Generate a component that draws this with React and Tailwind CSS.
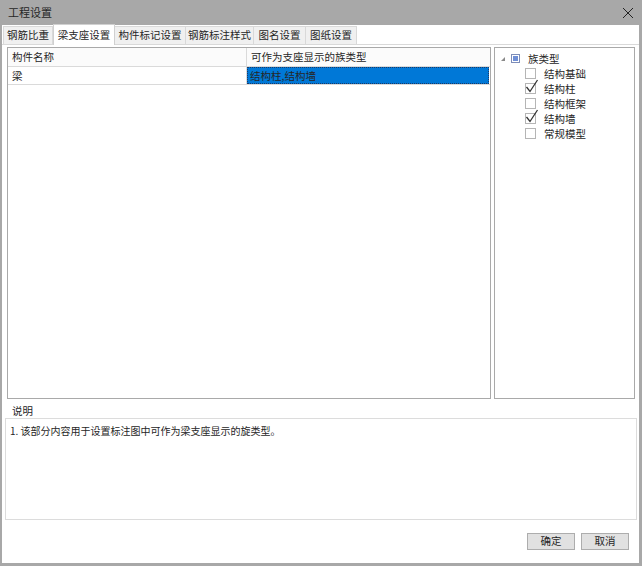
import React from 'react';

const tabs = [
  { label: '钢筋比重', w: 'w-[50px]' },
  { label: '梁支座设置', w: 'w-[62px]', active: true },
  { label: '构件标记设置', w: 'w-[71px]' },
  { label: '钢筋标注样式', w: 'w-[68px]' },
  { label: '图名设置', w: 'w-[52px]' },
  { label: '图纸设置', w: 'w-[51px]' },
];

const families = [
  { name: '结构基础', checked: false },
  { name: '结构柱', checked: true },
  { name: '结构框架', checked: false },
  { name: '结构墙', checked: true },
  { name: '常规模型', checked: false },
];

function CheckBox({ checked }) {
  return (
    <div className="relative w-[11px] h-[11px] border border-[#b5b5b5] bg-white">
      {checked && (
        <svg width="14" height="14" viewBox="0 0 14 14" className="absolute -left-[1px] -top-[5px]">
          <path d="M1.5 8 L5 12.5 L12.5 1" fill="none" stroke="#333" strokeWidth="1.3" />
        </svg>
      )}
    </div>
  );
}

export default function App() {
  return (
    <div
      className="w-[642px] h-[566px] bg-[#a8a8a8] pl-[2px] pr-[3px] pb-[3px] flex flex-col text-[10.5px] text-[#262626]"
      style={{ fontFamily: '"Noto Sans CJK SC", "Noto Sans", sans-serif' }}
    >
      {/* title bar */}
      <div className="h-[25px] flex items-center justify-between pl-[6px] pr-[4px] shrink-0">
        <span className="text-[11px]">工程设置</span>
        <svg width="12" height="12" viewBox="0 0 12 12" className="mr-[1px]">
          <path d="M1 1 L11 11 M11 1 L1 11" stroke="#222" strokeWidth="1" />
        </svg>
      </div>

      <div className="flex-1 bg-white flex flex-col">
        {/* tabs */}
        <div className="h-[20px] flex items-end pl-[1px] border-b border-[#d9d9d9] shrink-0">
          {tabs.map((t) =>
            t.active ? (
              <div
                key={t.label}
                className={`${t.w} h-[21px] -mb-[1px] bg-white border border-b-0 border-[#d0d0d0] flex items-center justify-center leading-none`}
              >
                {t.label}
              </div>
            ) : (
              <div
                key={t.label}
                className={`${t.w} h-[18px] bg-[#f0f0f0] border border-b-0 border-l-0 first:border-l border-[#d9d9d9] flex items-center justify-center leading-none`}
              >
                {t.label}
              </div>
            )
          )}
        </div>

        {/* panels */}
        <div className="flex gap-[3px] pl-[5px] pt-[2px] h-[357px] shrink-0">
          {/* table */}
          <div className="w-[484px] h-[352px] border border-[#a9a9a9] flex flex-col">
            <div className="h-[19px] flex border-b border-[#dadada] bg-[#fbfbfb] shrink-0">
              <div className="w-[239px] pl-[4px] flex items-center border-r border-[#dadada]">构件名称</div>
              <div className="flex-1 pl-[4px] flex items-center">可作为支座显示的族类型</div>
            </div>
            <div className="h-[18px] flex border-b border-[#dadada] shrink-0">
              <div className="w-[239px] pl-[4px] flex items-center border-r border-[#dadada]">梁</div>
              <div className="flex-1 mr-[1px] pl-[2px] flex items-center bg-[#0078d7] border border-dotted border-[#1d3a66]">
                结构柱,结构墙
              </div>
            </div>
          </div>

          {/* tree */}
          <div className="w-[141px] h-[352px] border border-[#a9a9a9] pt-[3px]">
            <div className="h-[15px] flex items-center">
              <svg width="6" height="6" viewBox="0 0 6 6" className="ml-[5px]">
                <path d="M5 1 L5 5 L1 5 Z" fill="#8a8a8a" />
              </svg>
              <div className="ml-[5px] w-[9px] h-[9px] border border-[#7d8db8] bg-white flex items-center justify-center">
                <div className="w-[5px] h-[5px] bg-[#6f8fd6]" />
              </div>
              <span className="ml-[8px]">族类型</span>
            </div>
            {families.map((f) => (
              <div key={f.name} className="h-[15px] flex items-center pl-[30px]">
                <CheckBox checked={f.checked} />
                <span className="ml-[8px]">{f.name}</span>
              </div>
            ))}
          </div>
        </div>

        {/* description */}
        <div className="pl-[10px] h-[16px] leading-[16px] -mb-[1px] mt-[1px]">说明</div>
        <div className="ml-[3px] w-[632px] h-[102px] border border-[#dcdcdc] pl-[4px] pt-[4px] shrink-0 text-[10px]">
          1. 该部分内容用于设置标注图中可作为梁支座显示的旋类型。
        </div>

        {/* buttons */}
        <div className="flex-1 flex items-center justify-end gap-[6px] pr-[10px]">
          <button className="w-[48px] h-[17px] bg-[#e1e1e1] border border-[#adadad] leading-none text-[10.5px]">确定</button>
          <button className="w-[48px] h-[17px] bg-[#e1e1e1] border border-[#adadad] leading-none text-[10.5px]">取消</button>
        </div>
      </div>
    </div>
  );
}
